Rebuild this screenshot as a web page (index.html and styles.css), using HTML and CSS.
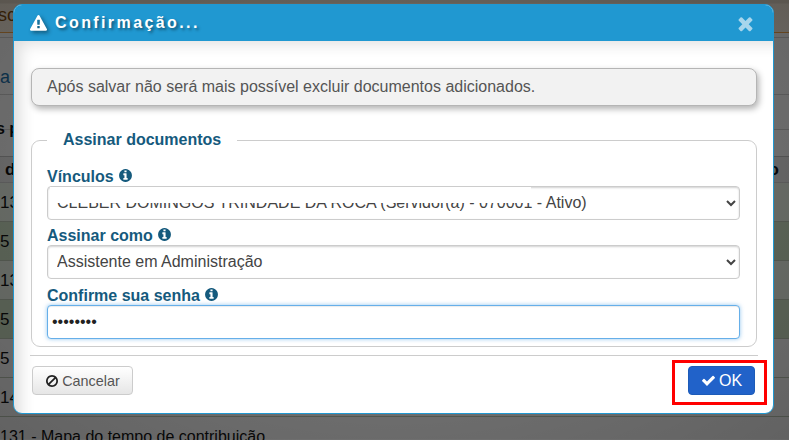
FILE: index.html
```html
<!DOCTYPE html>
<html lang="pt-BR">
<head>
<meta charset="utf-8">
<title>Confirmação</title>
<link rel="stylesheet" href="styles.css">
</head>
<body>
<svg class="defs" width="0" height="0" aria-hidden="true">
  <symbol id="i-warn" viewBox="0 0 1792 1792"><path d="M1024 1375v-190q0-14-9.500-23.500t-22.500-9.500h-192q-13 0-22.500 9.500t-9.500 23.500v190q0 14 9.500 23.500t22.500 9.500h192q13 0 22.500-9.500t9.500-23.500zm-2-374l18-459q0-12-10-19-13-11-24-11h-220q-11 0-24 11-10 7-10 21l17 457q0 10 10 16.500t24 6.500h185q14 0 23.500-6.500t10.500-16.500zm-14-934l768 1408q35 63-2 126-17 29-46.500 46t-63.500 17h-1536q-34 0-63.500-17t-46.500-46q-37-63-2-126l768-1408q17-31 47-49t65-18 65 18 47 49z"/></symbol>
  <symbol id="i-times" viewBox="0 0 1792 1792"><path d="M1490 1322q0 40-28 68l-136 136q-28 28-68 28t-68-28l-294-294-294 294q-28 28-68 28t-68-28l-136-136q-28-28-28-68t28-68l294-294-294-294q-28-28-28-68t28-68l136-136q28-28 68-28t68 28l294 294 294-294q28-28 68-28t68 28l136 136q28 28 28 68t-28 68l-294 294 294 294q28 28 28 68z"/></symbol>
  <symbol id="i-info" viewBox="0 0 1792 1792"><path d="M1152 1376v-160q0-14-9-23t-23-9h-96v-512q0-14-9-23t-23-9h-320q-14 0-23 9t-9 23v160q0 14 9 23t23 9h96v320h-96q-14 0-23 9t-9 23v160q0 14 9 23t23 9h448q14 0 23-9t9-23zm-128-896v-160q0-14-9-23t-23-9h-192q-14 0-23 9t-9 23v160q0 14 9 23t23 9h192q14 0 23-9t9-23zm640 416q0 209-103 385.500t-279.500 279.500-385.500 103-385.500-103-279.500-279.500-103-385.500 103-385.500 279.500-279.500 385.500-103 385.500 103 279.500 279.500 103 385.500z"/></symbol>
  <symbol id="i-ban" viewBox="0 0 1792 1792"><path d="M1440 893q0-161-87-295l-754 753q137 89 297 89 111 0 211.500-43.500t173.500-116.500 116-174.500 43-212.500zm-999 299l755-754q-135-91-300-91-148 0-273 73t-198 199-73 274q0 162 89 299zm1223-299q0 157-61 300t-163.500 246-245 164-298.500 61-298.500-61-245-164-163.500-246-61-300 61-299.500 163.500-245.500 245-164 298.500-61 298.500 61 245 164 163.500 245.500 61 299.500z"/></symbol>
  <symbol id="i-check" viewBox="0 0 1792 1792"><path d="M1671 566q0 40-28 68l-724 724-136 136q-28 28-68 28t-68-28l-136-136-362-362q-28-28-28-68t28-68l136-136q28-28 68-28t68 28l294 295 656-657q28-28 68-28t68 28l136 136q28 28 28 68z"/></symbol>
</svg>

<div class="page">
  <div class="page-tabs"><span class="tab-text">sc</span></div>
  <div class="page-link"><span>a</span></div>
  <div class="page-title"><span>s p</span></div>
  <div class="page-band"></div>
  <div class="page-head"><span>d</span><span>o</span></div>
  <div class="row row-light"><span>13</span></div>
  <div class="row row-green"><span>5 -</span></div>
  <div class="row row-light"><span>13</span></div>
  <div class="row row-green"><span>5 -</span></div>
  <div class="row"><span>5 -</span></div>
  <div class="row"><span>14</span></div>
  <div class="row row-last"><span>131 - Mapa do tempo de contribuição</span></div>
</div>
<div class="backdrop"></div>

<div class="modal">
  <header class="modal-head">
    <h1 class="modal-title"><svg class="ic ic-warn"><use href="#i-warn"/></svg>Confirmação...</h1>
    <svg class="ic ic-close"><use href="#i-times"/></svg>
  </header>
  <div class="modal-body">
    <p class="notice">Após salvar não será mais possível excluir documentos adicionados.</p>
    <fieldset class="sign">
      <legend>Assinar documentos</legend>
      <label class="lbl lbl-first">Vínculos <svg class="ic ic-info"><use href="#i-info"/></svg></label>
      <div class="redacted">
        <select class="ctl"><option>CLEBER DOMINGOS TRINDADE DA ROCA (Servidor(a) - 070001 - Ativo)</option></select>
        <span class="mask"></span>
      </div>
      <label class="lbl lbl-tight">Assinar como <svg class="ic ic-info"><use href="#i-info"/></svg></label>
      <select class="ctl"><option>Assistente em Administração</option></select>
      <label class="lbl">Confirme sua senha <svg class="ic ic-info"><use href="#i-info"/></svg></label>
      <input class="ctl ctl-focus" type="password" value="12345678">
    </fieldset>
    <footer class="modal-foot">
      <button class="btn btn-cancel" type="button"><svg class="ic"><use href="#i-ban"/></svg>Cancelar</button>
      <button class="btn btn-ok" type="button"><svg class="ic"><use href="#i-check"/></svg>OK</button>
    </footer>
  </div>
</div>
<div class="callout"></div>
</body>
</html>
```
FILE: styles.css
```css
* { box-sizing: border-box; }
html, body { margin: 0; height: 440px; overflow: hidden; }
body { position: relative; width: 789px; font-family: "Liberation Sans", Arial, sans-serif; font-size: 16px; background: #fff; }
.defs { position: absolute; }
.ic { width: 16px; height: 16px; fill: currentColor; display: inline-block; flex: none; }

.page { color: #111; line-height: 20px; font-size: 16px; }
.page-tabs { height: 38px; padding-top: 4px; background: linear-gradient(#d8cdbd 0, #d8cdbd 3px, #eadfd0 4px, #f0e6d8 32px, #e8a04a 32px, #e8a04a 33px, #f2f2f2 33px); color: #7a4a10; border-bottom: 1px solid #ccc; }
.tab-text { display: block; font-size: 18px; padding-top: 1px; margin-left: -2px; }
.page-link { height: 57px; background: #f4f4f4; border-bottom: 1px solid #ccc; color: #1a6fa8; padding-top: 29px; font-size: 18px; }
.page-title { height: 35px; background: #f4f4f4; border-bottom: 1px solid #ccc; font-weight: 700; padding-top: 24px; margin-left: -4px; white-space: nowrap; }
.page-band { height: 27px; background: #f4f4f4; border-bottom: 1px solid #bbb; }
.page-head { height: 26px; background: #e4e4e4; border-bottom: 1px solid #ccc; font-weight: 700; font-size: 17px; padding: 3px 10px 0 5px; display: flex; justify-content: space-between; }
.row { height: 39px; padding-top: 10px; background: #f4f4f4; border-bottom: 1px solid #b9c4b2; font-size: 17px; }
.row-light { background: #e6eee2; }
.row-green { background: #c9dcc0; }
.row-last { padding-top: 10px; border: 0; height: 22px; font-size: 16px; }

.backdrop { position: absolute; inset: 0; background: radial-gradient(ellipse at 50% 40%, rgba(0,0,0,.48), rgba(0,0,0,.6)); }

.modal { position: absolute; left: 13px; top: 4px; width: 761px; height: 410px; background: #fff; border: 1px solid #2098d1; border-radius: 9px; overflow: hidden; display: flex; flex-direction: column; }
.modal-head { height: 36px; flex: none; background: #2098d1; color: #fff; display: flex; align-items: center; justify-content: space-between; padding: 0 17px 0 16px; }
.modal-title { margin: 0; font-size: 16px; font-weight: 700; letter-spacing: 2.4px; text-shadow: 2px 2px 3px rgba(0,0,0,.45); display: flex; align-items: center; gap: 8px; }
.ic-warn { width: 17px; height: 17px; filter: drop-shadow(2px 2px 2px rgba(0,0,0,.45)); }
.ic-close { color: #a8d6ec; width: 21px; height: 21px; }
.modal-body { flex: 1; display: flex; flex-direction: column; padding: 27px 16px 0 16px; box-shadow: inset 16px 12px 16px -10px rgba(0,0,0,.14); }

.notice { margin: 0 0 0 1px; height: 38px; display: flex; align-items: center; padding: 0 15px; background: #f2f2f2; border: 1px solid #b5b5b5; border-radius: 8px; box-shadow: 2px 3px 6px rgba(0,0,0,.3); color: #555; font-size: 16px; }

.sign { margin: 25px 0 0 1px; padding: 0 16px 8px 15px; border: 1px solid #ccc; border-radius: 9px; height: 216px; min-width: 0; }
.sign legend { margin-left: 0; padding: 0 16px; font-size: 16px; font-weight: 700; color: #155a7d; line-height: 18px; }
.lbl { display: block; height: 20px; margin-top: 7px; font-size: 16px; font-weight: 700; color: #155a7d; line-height: 20px; }
.lbl-first { margin-top: 18px; }
.lbl-tight { margin-top: 6px; }
.ic-info { width: 15px; height: 15px; vertical-align: -1px; }
.ctl { display: block; width: 100%; height: 34px; margin-top: -1px; border: 1px solid #ccc; border-radius: 4px; background: #fff; color: #444; font-family: inherit; font-size: 16px; padding: 0 6px 2px 5px; box-shadow: inset 0 1px 2px rgba(0,0,0,.18); }
.ctl-focus { border-color: #66afe9; box-shadow: inset 0 1px 1px rgba(0,0,0,.08), 0 0 4px rgba(102,175,233,.7); outline: none; padding: 0 6px 0 4px; color: #222; }
.redacted { position: relative; margin-top: -1px; }
.mask { position: absolute; left: 3px; top: 1px; width: 481px; height: 16px; background: #fff; }

.modal-foot { margin: 8px -1px 0 0; border-top: 1px solid #ccc; padding: 10px 3px 0 2px; display: flex; justify-content: space-between; }
.btn { height: 29px; font-family: inherit; font-size: 16px; display: inline-flex; align-items: center; justify-content: center; gap: 3px; border-radius: 4px; padding: 0; }
.btn-cancel { width: 101px; font-size: 14.4px; color: #555; border: 1px solid #ccc; background: linear-gradient(#fff, #e6e6e6); }
.btn-cancel .ic { width: 14px; height: 14px; color: #222; }
.btn-ok { width: 67px; color: #fff; border: 1px solid #1d5bb8; background: #2162c9; }
.btn-ok .ic { width: 15px; height: 15px; }

.callout { position: absolute; left: 672px; top: 360px; width: 95px; height: 45px; border: 3px solid #f00; }
```
